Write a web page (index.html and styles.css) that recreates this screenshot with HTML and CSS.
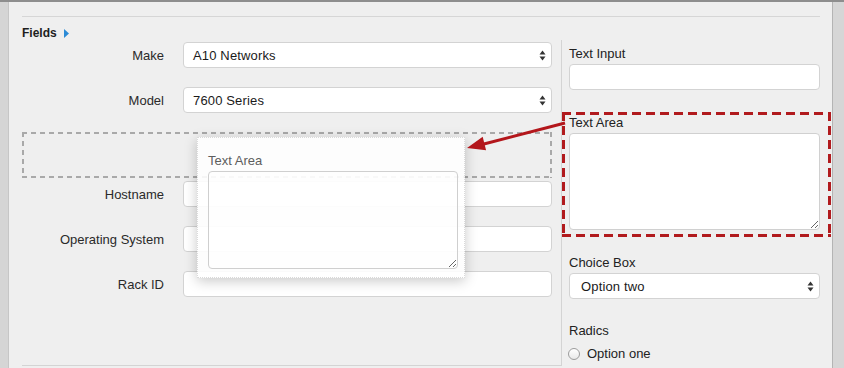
FILE: index.html
```html
<!DOCTYPE html>
<html>
<head>
<meta charset="utf-8">
<title>Fields</title>
<link rel="stylesheet" href="styles.css">
</head>
<body>
<div class="window">
  <div class="lstrip"></div>
  <main class="main">
    <div class="rule"></div>
    <div class="fields-head">
      <span>Fields</span>
      <svg class="tri" width="5" height="9" viewBox="0 0 5 9"><path d="M0 0 L5 4.5 L0 9 Z" fill="#2b8bd6"/></svg>
    </div>
    <div class="cols">
      <section class="left">
        <div class="row first">
          <label class="lbl">Make</label>
          <div class="select">
            <span>A10 Networks</span>
            <svg class="updown" width="7" height="11" viewBox="0 0 7 11"><path d="M3.5 0.5 L6.5 4.5 L0.5 4.5 Z M0.5 6.5 L6.5 6.5 L3.5 10.5 Z" fill="#333"/></svg>
          </div>
        </div>
        <div class="row">
          <label class="lbl">Model</label>
          <div class="select">
            <span>7600 Series</span>
            <svg class="updown" width="7" height="11" viewBox="0 0 7 11"><path d="M3.5 0.5 L6.5 4.5 L0.5 4.5 Z M0.5 6.5 L6.5 6.5 L3.5 10.5 Z" fill="#333"/></svg>
          </div>
        </div>
        <div class="drop"></div>
        <div class="row tight">
          <label class="lbl">Hostname</label>
          <input class="input" type="text">
        </div>
        <div class="row">
          <label class="lbl">Operating System</label>
          <input class="input" type="text">
        </div>
        <div class="row">
          <label class="lbl">Rack ID</label>
          <input class="input" type="text">
        </div>
      </section>
      <section class="right">
        <label class="rlbl first">Text Input</label>
        <input class="input rinput" type="text">
        <div class="group">
          <label class="rlbl">Text Area</label>
          <textarea class="area"></textarea>
        </div>
        <label class="rlbl choice">Choice Box</label>
        <div class="select rselect">
          <span>Option two</span>
          <svg class="updown" width="7" height="11" viewBox="0 0 7 11"><path d="M3.5 0.5 L6.5 4.5 L0.5 4.5 Z M0.5 6.5 L6.5 6.5 L3.5 10.5 Z" fill="#333"/></svg>
        </div>
        <label class="rlbl radics">Radics</label>
        <div class="radio-row"><span class="radio"></span><span>Option one</span></div>
      </section>
    </div>
  </main>
  <div class="rstrip"></div>

  <div class="popup">
    <div class="plbl">Text Area</div>
    <textarea class="parea"></textarea>
  </div>

  <svg class="arrow" width="844" height="368" viewBox="0 0 844 368">
    <line x1="565" y1="123" x2="482" y2="144.5" stroke="#b3161b" stroke-width="3"/>
    <polygon points="467,148 482.7,136.7 486.1,150.3" fill="#b3161b"/>
  </svg>
</div>
</body>
</html>
```
FILE: styles.css
```css
* { box-sizing: border-box; }
html, body { margin: 0; padding: 0; }
body {
  width: 844px;
  height: 368px;
  overflow: hidden;
  background: #efefef;
  font-family: "Liberation Sans", Arial, Helvetica, sans-serif;
  font-size: 13px;
  color: #222;
}
.window {
  position: relative;
  display: flex;
  width: 844px;
  height: 368px;
  border-top: 2px solid #8e8e8e;
  background: #efefef;
}
.lstrip {
  width: 9px;
  flex: none;
  background: #d5d5d5;
  border-right: 1px solid #c6c6c6;
}
.rstrip {
  width: 12px;
  flex: none;
  background: #d6d6d6;
  border-left: 1px solid #b4b4b4;
}
.main {
  flex: 1;
  padding: 14px 12px 0 13px;
}
.rule {
  height: 1px;
  background: #d6d6d6;
}
.fields-head {
  margin-top: 9px;
  height: 14px;
  line-height: 14px;
  font-size: 12px;
  font-weight: bold;
  color: #1e1e1e;
  display: flex;
  align-items: center;
  gap: 7px;
}
.tri { display: block; }
.cols {
  display: flex;
  height: 326px;
}
.left {
  width: 540px;
  flex: none;
  border-right: 1px solid #d4d4d4;
  border-bottom: 1px solid #d4d4d4;
  display: flex;
  flex-direction: column;
}
.row {
  display: grid;
  grid-template-columns: 142px 369px;
  column-gap: 19px;
  align-items: center;
  margin-top: 19px;
}
.row.first { margin-top: 2px; }
.row.tight { margin-top: 3px; }
.lbl {
  text-align: right;
  color: #2a2a2a;
  line-height: 18px;
  padding-top: 1px;
}
.select, .input {
  height: 26px;
  background: #fff;
  border: 1px solid #d3d3d3;
  border-radius: 4px;
  font-family: inherit;
  font-size: 13px;
  color: #1a1a1a;
}
.input { display: block; width: 100%; outline: none; padding: 0 8px; }
.select {
  display: flex;
  align-items: center;
  justify-content: space-between;
  padding: 1px 5px 0 9px;
  letter-spacing: 0.15px;
}
.updown { display: block; }
.drop {
  width: 530px;
  height: 46px;
  margin-top: 19px;
  background:
    repeating-linear-gradient(90deg, #a9a9a9 0 5px, transparent 5px 9px) left top / 100% 2px no-repeat,
    repeating-linear-gradient(90deg, #a9a9a9 0 5px, transparent 5px 9px) left bottom / 100% 2px no-repeat,
    repeating-linear-gradient(180deg, #a9a9a9 0 5px, transparent 5px 9px) left top / 2px 100% no-repeat,
    repeating-linear-gradient(180deg, #a9a9a9 0 5px, transparent 5px 9px) right top / 2px 100% no-repeat;
}
.right {
  width: 251px;
  margin-left: 7px;
  display: flex;
  flex-direction: column;
}
.rlbl {
  display: block;
  line-height: 16px;
  color: #222;
}
.rlbl.first { margin-top: 6px; }
.rinput { margin-top: 2px; }
.group {
  position: relative;
  margin-top: 22px;
  padding: 3px 0 7px;
  display: flex;
  flex-direction: column;
}
.group::after {
  content: "";
  position: absolute;
  top: 0;
  bottom: 0;
  left: -7px;
  right: -11px;
  pointer-events: none;
  background:
    repeating-linear-gradient(90deg, #b11a1d 0 9px, transparent 9px 14px) left top / 100% 3px no-repeat,
    repeating-linear-gradient(90deg, #b11a1d 0 9px, transparent 9px 14px) left bottom / 100% 3px no-repeat,
    repeating-linear-gradient(180deg, #b11a1d 0 9px, transparent 9px 14px) left top / 3px 100% no-repeat,
    repeating-linear-gradient(180deg, #b11a1d 0 9px, transparent 9px 14px) right top / 3px 100% no-repeat;
}
.area {
  display: block;
  margin-top: 2px;
  width: 251px;
  height: 97px;
  background: #fff;
  border: 1px solid #d0d0d0;
  border-radius: 4px;
  resize: both;
  outline: none;
}
.rlbl.choice { margin-top: 18px; }
.rselect { margin-top: 2px; padding-left: 11px; }
.rlbl.radics { margin-top: 24px; }
.radio-row {
  margin-top: 7px;
  display: flex;
  align-items: center;
  gap: 7px;
  line-height: 16px;
  margin-left: -1px;
}
.radio {
  width: 12px;
  height: 12px;
  border-radius: 50%;
  border: 1px solid #9c9c9c;
  background: linear-gradient(#fff, #e9e9e9);
}
.popup {
  position: absolute;
  left: 197px;
  top: 135px;
  width: 268px;
  height: 141px;
  padding: 15px 8px 10px 10px;
  background: rgba(255, 255, 255, 0.88);
  border: 1px dotted #dadada;
  box-shadow: 0 3px 12px rgba(0, 0, 0, 0.22);
}
.plbl {
  line-height: 16px;
  color: #5e5e5e;
}
.parea {
  display: block;
  margin-top: 2px;
  width: 250px;
  height: 98px;
  background: rgba(255, 255, 255, 0.35);
  border: 1px solid #cfcfcf;
  border-radius: 4px;
  resize: both;
  outline: none;
}
.arrow {
  position: absolute;
  left: 0;
  top: -2px;
  pointer-events: none;
}
```
